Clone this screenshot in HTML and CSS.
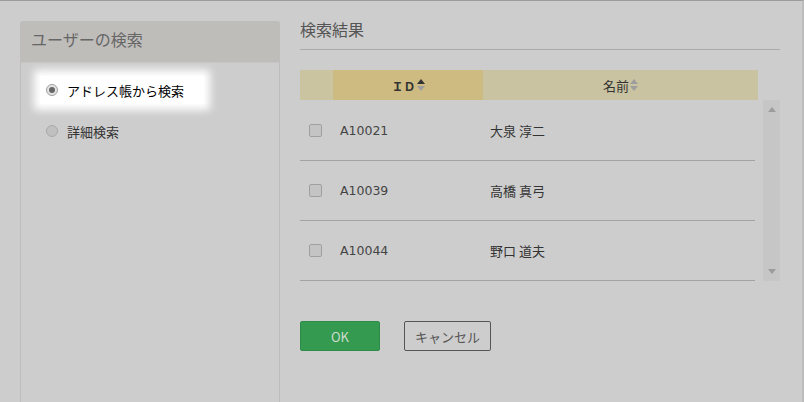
FILE: index.html
```html
<!DOCTYPE html>
<html lang="ja">
<head>
  <meta charset="UTF-8" />
  <title>ユーザーの検索</title>
  <link rel="stylesheet" href="styles.css">
</head>
<body>

  <div class="screen">
    <aside class="panel">
      <div class="panel-head">ユーザーの検索</div>
      <div class="panel-body">
        <label class="radio-row active">
          <span class="radio checked"></span>
          <span>アドレス帳から検索</span>
        </label>
        <label class="radio-row">
          <span class="radio"></span>
          <span>詳細検索</span>
        </label>
      </div>
    </aside>

    <main class="results">
      <h2>検索結果</h2>

      <div class="grid">
        <div class="grid-head">
          <div class="col-check"></div>
          <div class="col-id sorted">ＩＤ
            <svg class="sort" width="8" height="14" viewBox="0 0 8 14">
              <path d="M4 1 L8 6 L0 6 Z" fill="#333"/>
              <path d="M0 8 L8 8 L4 13 Z" fill="#9e9e9e"/>
            </svg>
          </div>
          <div class="col-name">名前
            <svg class="sort" width="8" height="14" viewBox="0 0 8 14">
              <path d="M4 1 L8 6 L0 6 Z" fill="#9e9e9e"/>
              <path d="M0 8 L8 8 L4 13 Z" fill="#9e9e9e"/>
            </svg>
          </div>
        </div>

        <div class="grid-body">
          <div class="rows">
            <div class="row">
              <div class="col-check"><span class="check"></span></div>
              <div class="col-id">A10021</div>
              <div class="col-name">大泉 淳二</div>
            </div>
            <div class="row">
              <div class="col-check"><span class="check"></span></div>
              <div class="col-id">A10039</div>
              <div class="col-name">高橋 真弓</div>
            </div>
            <div class="row">
              <div class="col-check"><span class="check"></span></div>
              <div class="col-id">A10044</div>
              <div class="col-name">野口 道夫</div>
            </div>
          </div>
          <div class="scrollbar">
            <svg width="8" height="5" viewBox="0 0 8 5"><path d="M4 0 L8 5 L0 5 Z" fill="#9c9c9c"/></svg>
            <svg width="8" height="5" viewBox="0 0 8 5"><path d="M0 0 L8 0 L4 5 Z" fill="#9c9c9c"/></svg>
          </div>
        </div>
      </div>

      <div class="actions">
        <button class="btn-ok">OK</button>
        <button class="btn-cancel">キャンセル</button>
      </div>
    </main>
  </div>

</body>
</html>
```

FILE: styles.css
```css
html, body {
  margin: 0;
  padding: 0;
  height: 100%;
}

body {
  font-family: "Noto Sans CJK JP", sans-serif;
  background: #cdcdcd;
  color: #333;
  font-size: 13px;
  overflow: hidden;
}

.screen {
  display: flex;
  gap: 20px;
  height: 100%;
  box-sizing: border-box;
  padding: 20px 0 0 20px;
  border-top: 1px solid #9c9c9c;
  border-right: 2px solid #bdbdbd;
}

/* left panel */
.panel {
  width: 260px;
  box-sizing: border-box;
  border: 1px solid #bdbdbd;
  border-bottom: none;
  border-radius: 3px 3px 0 0;
  background: #cdcdcd;
}

.panel-head {
  height: 40px;
  line-height: 35px;
  padding-left: 10px;
  background: #bfbdba;
  color: #666;
  font-size: 16px;
  border-bottom: 1px solid #c8c6c4;
}

.panel-body {
  display: flex;
  flex-direction: column;
  gap: 13px;
  padding: 13px 0 0 19px;
}

.radio-row {
  display: flex;
  align-items: center;
  gap: 9px;
  height: 28px;
  width: 158px;
  padding-left: 6px;
  color: #333;
}

.radio-row.active {
  background: #fff;
  color: #000;
  box-shadow: 0 0 8px 6px #fff;
}

.radio {
  width: 10px;
  height: 10px;
  border-radius: 50%;
  border: 1px solid #a9a9a9;
  background: #c0c0c0;
  display: flex;
  align-items: center;
  justify-content: center;
}

.radio.checked {
  background: #e4e4e4;
  border-color: #a0a0a0;
}

.radio.checked::after {
  content: "";
  width: 6px;
  height: 6px;
  border-radius: 50%;
  background: #666;
}

/* results */
.results {
  width: 480px;
}

h2 {
  margin: 0;
  font-size: 16px;
  font-weight: normal;
  color: #555;
  height: 28px;
  line-height: 16px;
  border-bottom: 1px solid #a9a9a9;
}

.grid {
  margin-top: 20px;
}

.grid-head {
  display: flex;
  width: 458px;
  height: 30px;
  background: #cac3a2;
  font-weight: bold;
  color: #333;
}

.grid-head > div {
  display: flex;
  align-items: center;
  justify-content: center;
}

.grid-head .col-check {
  background: #cbc4a1;
}

.grid-head .col-id {
  font-size: 12px;
  background: #cdbb81;
}

.grid-head .col-name {
  font-weight: normal;
}

.sort {
  margin-left: 1px;
}

.col-check { width: 33px; }
.col-id { width: 150px; }
.col-name { flex: 1; }

.grid-body {
  display: flex;
  align-items: flex-start;
}

.rows {
  width: 455px;
  margin-top: 1px;
}

.row {
  display: flex;
  align-items: center;
  height: 60px;
  border-bottom: 1px solid #a3a3a0;
  box-sizing: border-box;
}

.row .col-check {
  padding-left: 9px;
  box-sizing: border-box;
}

.row .col-id {
  padding-left: 7px;
  box-sizing: border-box;
  font-family: "DejaVu Sans", sans-serif;
  font-size: 12.5px;
  color: #444;
}

.row .col-name {
  padding-left: 7px;
  color: #333;
}

.check {
  display: block;
  width: 11px;
  height: 11px;
  border: 1px solid #a0a0a0;
  border-radius: 2px;
  background: #c4c4c4;
}

.scrollbar {
  width: 17px;
  height: 181px;
  margin-left: 8px;
  background: #c6c6c6;
  display: flex;
  flex-direction: column;
  justify-content: space-between;
  align-items: center;
  padding: 7px 0;
  box-sizing: border-box;
}

.actions {
  display: flex;
  gap: 24px;
  margin-top: 40px;
}

button {
  height: 30px;
  font-family: "Noto Sans CJK JP", sans-serif;
  font-size: 13px;
  border-radius: 2px;
  cursor: pointer;
}

.btn-ok {
  width: 80px;
  background: #339a4f;
  border: 1px solid #2e8c47;
  color: #cfdcd0;
}

.btn-cancel {
  width: 87px;
  background: transparent;
  border: 1px solid #555;
  color: #555;
}
```
